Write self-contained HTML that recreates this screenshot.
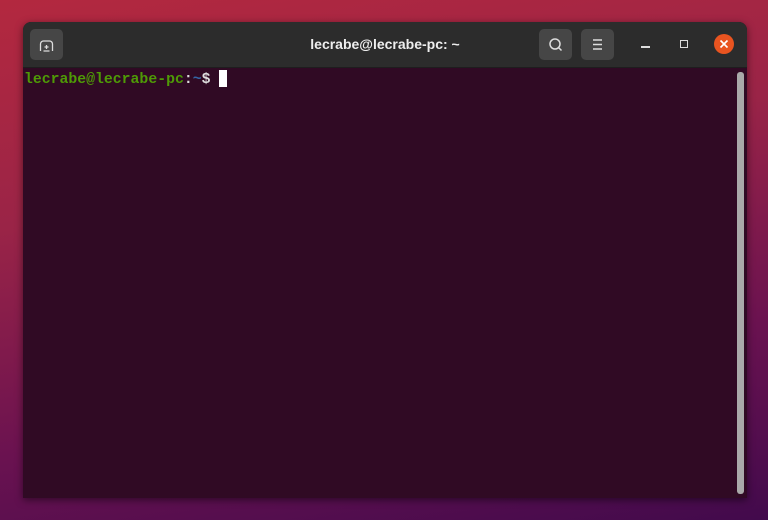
<!DOCTYPE html>
<html><head><style>
body{margin:0;width:768px;height:520px;overflow:hidden;position:relative;
background:linear-gradient(170deg,#b3283f 0%,#9a2447 35%,#6a1250 70%,#420a4c 100%);font-family:"Liberation Sans",sans-serif}
.win{position:absolute;left:23px;top:22px;width:724px;height:476px;border-radius:8px 8px 0 0;overflow:hidden;box-shadow:0 2px 8px rgba(0,0,0,.5);background:#300a24}
.tb{height:45px;background:#2c2c2c;position:relative;border-bottom:1px solid #1e1e1e}
.btn{position:absolute;top:7px;width:33px;height:31px;background:#464646;border-radius:5px}
.title{position:absolute;left:0;right:0;top:14px;text-align:center;color:#eee;font-weight:bold;font-size:14px}
.term{position:absolute;top:46px;left:0;right:0;bottom:0;background:#300a24;font-family:"Liberation Mono",monospace;font-size:14.8px;font-weight:bold}
.line{position:absolute;left:1px;top:2px;white-space:pre}
.sb{position:absolute;left:714px;top:4px;width:7px;height:422px;background:#a9a9a9;border-radius:3px}
</style></head><body>
<div class="win">
 <div class="tb">
  <div class="btn" style="left:7px"><svg width="33" height="31"><path d="M10.5 22v-7a3 3 0 0 1 3-3h6a3 3 0 0 1 3 3v7M13.5 22h6M16.5 16v4M14.5 18h4" stroke="#ddd" stroke-width="1.3" fill="none"/></svg></div>
  <div class="title">lecrabe@lecrabe-pc: ~</div>
  <div class="btn" style="left:516px"><svg width="33" height="31"><circle cx="16" cy="15" r="5" stroke="#ddd" stroke-width="1.5" fill="none"/><path d="M19.5 18.5l3 3" stroke="#ddd" stroke-width="1.5"/></svg></div>
  <div class="btn" style="left:558px"><svg width="33" height="31"><path d="M12 11h9M12 15.5h9M12 20h9" stroke="#ddd" stroke-width="1.5"/></svg></div>
  <div style="position:absolute;left:618px;top:24px;width:9px;height:1.5px;background:#ddd"></div>
  <div style="position:absolute;left:657px;top:18px;width:6px;height:6px;border:1.3px solid #ddd"></div>
  <div style="position:absolute;left:691px;top:12px;width:20px;height:20px;border-radius:50%;background:#e95420"><svg width="20" height="20"><path d="M6.5 6.5l7 7M13.5 6.5l-7 7" stroke="#fff" stroke-width="1.6"/></svg></div>
 </div>
 <div class="term">
  <div class="line"><span style="color:#4e9a06">lecrabe@lecrabe-pc</span><span style="color:#ddd">:</span><span style="color:#3465a4">~</span><span style="color:#ddd">$ </span><span style="display:inline-block;width:8px;height:17px;background:#fff;vertical-align:-4px"></span></div>
  <div class="sb"></div>
 </div>
</div>
</body></html>
